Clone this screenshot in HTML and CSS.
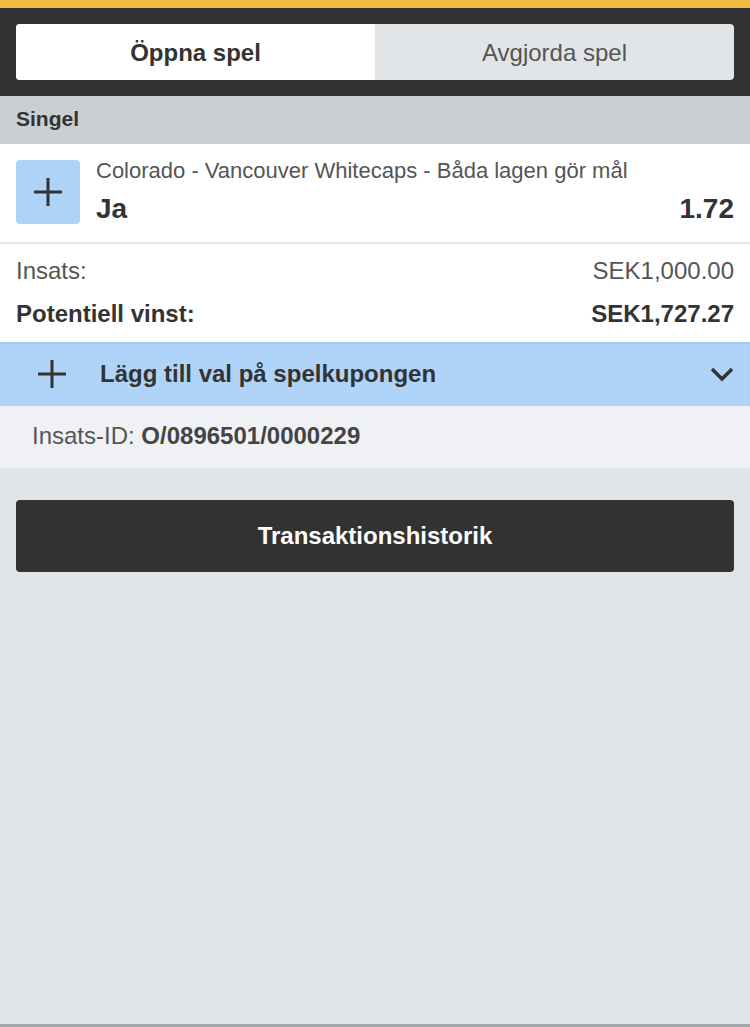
FILE: index.html
```html
<!DOCTYPE html>
<html lang="sv">
<head>
    <meta charset="UTF-8">
    <meta name="viewport" content="width=device-width, initial-scale=1.0">
    <title>Mina spel</title>
    <link rel="stylesheet" href="styles.css">
</head>
<body>
    <header class="topbar">
        <div class="tabs">
            <a class="tab active" href="#">Öppna spel</a>
            <a class="tab" href="#">Avgjorda spel</a>
        </div>
    </header>

    <div class="section-title">Singel</div>

    <div class="bet">
        <div class="selection">
            <div class="add-box">
                <svg width="28" height="28" viewBox="0 0 28 28"><path d="M14 0v28M0 14h28" stroke="#333" stroke-width="3"/></svg>
            </div>
            <div class="selection-info">
                <p class="market">Colorado - Vancouver Whitecaps - Båda lagen gör mål</p>
                <div class="pick">
                    <span>Ja</span>
                    <span>1.72</span>
                </div>
            </div>
        </div>

        <div class="summary">
            <div class="row">
                <span>Insats:</span>
                <span>SEK1,000.00</span>
            </div>
            <div class="row strong">
                <span>Potentiell vinst:</span>
                <span>SEK1,727.27</span>
            </div>
        </div>
    </div>

    <div class="add-row">
        <svg class="add-icon" width="28" height="28" viewBox="0 0 28 28"><path d="M14 0v28M0 14h28" stroke="#333" stroke-width="3"/></svg>
        <span class="add-label">Lägg till val på spelkupongen</span>
        <svg class="chevron" width="24" height="16" viewBox="0 0 24 16"><path d="M2 3l10 10L22 3" fill="none" stroke="#333" stroke-width="3.5"/></svg>
    </div>

    <div class="bet-id">Insats-ID: <b>O/0896501/0000229</b></div>

    <div class="actions">
        <button class="history-btn">Transaktionshistorik</button>
    </div>
</body>
</html>
```

FILE: styles.css
```css
html, body {
    height: 100%;
}

body {
    font-family: "Liberation Sans", Arial, sans-serif;
    margin: 0;
    padding: 0;
    background-color: #e1e5e8;
    color: #333;
    box-sizing: border-box;
    border-bottom: 3px solid #a3a6a9;
}

p {
    margin: 0;
}

.topbar {
    background-color: #323232;
    border-top: 8px solid #f3bb41;
    padding: 16px 16px;
}

.tabs {
    display: flex;
    border-radius: 4px;
    overflow: hidden;
    background-color: #e1e5e8;
}

.tab {
    flex: 1;
    height: 56px;
    line-height: 58px;
    text-align: center;
    font-size: 24px;
    color: #555;
    text-decoration: none;
}

.tab.active {
    background-color: #fff;
    color: #333;
    font-weight: bold;
}

.section-title {
    background-color: #cbcfd2;
    height: 48px;
    line-height: 46px;
    padding: 0 16px;
    font-size: 21px;
    font-weight: bold;
}

.bet {
    background-color: #fff;
}

.selection {
    display: flex;
    gap: 16px;
    padding: 16px 16px 18px;
    border-bottom: 2px solid #e3e5e6;
}

.add-box {
    width: 64px;
    height: 64px;
    flex: none;
    border-radius: 4px;
    background-color: #add3f7;
    display: flex;
    align-items: center;
    justify-content: center;
}

.selection-info {
    flex: 1;
    height: 64px;
}

.market {
    font-size: 22px;
    color: #555;
    line-height: 26px;
    margin-top: -2px;
}

.pick {
    display: flex;
    justify-content: space-between;
    font-size: 28px;
    font-weight: bold;
    line-height: 32px;
    margin-top: 9px;
}

.summary {
    padding: 12px 16px 13px;
}

.row {
    display: flex;
    justify-content: space-between;
    font-size: 24px;
    color: #555;
    line-height: 30px;
}

.row.strong {
    color: #333;
    font-weight: bold;
    margin-top: 13px;
}

.add-row {
    display: flex;
    align-items: center;
    height: 64px;
    padding: 0 16px 0 38px;
    background-color: #afd4f8;
    box-shadow: inset 0 2px 2px rgba(0, 0, 0, 0.06);
}

.add-label {
    flex: 1;
    margin-left: 34px;
    font-size: 24px;
    font-weight: bold;
}

.bet-id {
    background-color: #eff1f4;
    height: 62px;
    line-height: 60px;
    padding: 0 32px;
    font-size: 24px;
    color: #555;
}

.bet-id b {
    color: #444;
}

.actions {
    padding: 32px 16px;
}

.history-btn {
    display: block;
    width: 100%;
    height: 72px;
    border: none;
    border-radius: 4px;
    background-color: #323232;
    color: #fff;
    font-family: inherit;
    font-size: 24px;
    font-weight: bold;
    cursor: pointer;
}
```
